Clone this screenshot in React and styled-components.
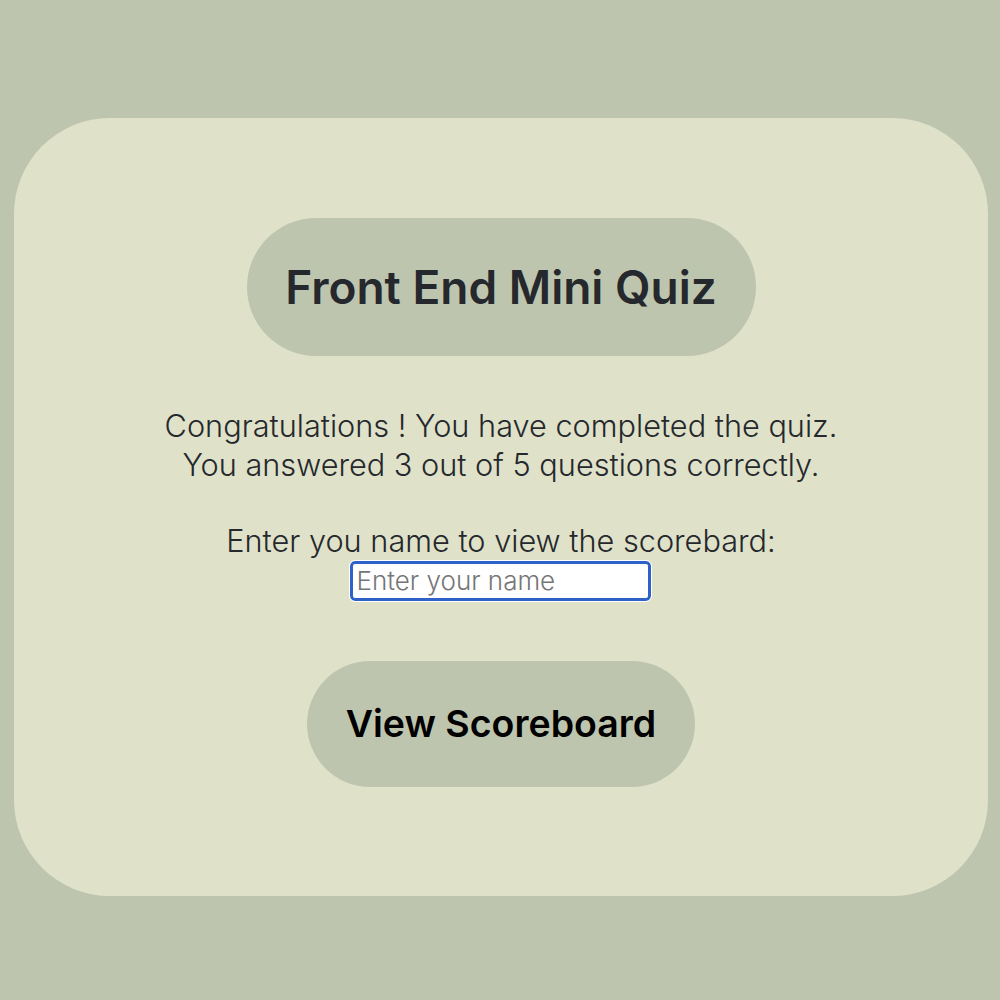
import styled, { createGlobalStyle } from "styled-components";

const GlobalStyle = createGlobalStyle`
  html, body {
    margin: 0;
    padding: 0;
    background: #bec5ae;
    font-family: Inter, "Noto Sans", sans-serif;
  }
`;

// Component

function App() {
  return (
    <>
      <GlobalStyle />
      <Page>
        <Card>
          <Title>Front End Mini Quiz</Title>
          <Message>
            Congratulations ! You have completed the quiz.
            <br />
            You answered 3 out of 5 questions correctly.
          </Message>
          <NameForm>
            <Label htmlFor="name">Enter you name to view the scorebard:</Label>
            <NameInput id="name" type="text" placeholder="Enter your name" />
          </NameForm>
          <ActionButton>View Scoreboard</ActionButton>
        </Card>
      </Page>
    </>
  );
}

export default App;

// Style

const Page = styled.main`
  display: flex;
  justify-content: center;
  padding: 118px 12px 0 14px;
  min-height: 1000px;
  box-sizing: border-box;
`;

const Card = styled.section`
  flex: 1;
  display: flex;
  flex-direction: column;
  align-items: center;
  height: 778px;
  box-sizing: border-box;
  padding-top: 100px;
  background: #dfe2c9;
  border-radius: 96px;
`;

const Title = styled.h1`
  margin: 0;
  width: 509px;
  height: 138px;
  display: flex;
  align-items: center;
  justify-content: center;
  background: #bec5ae;
  border-radius: 69px;
  color: #25282c;
  font-size: 46px;
  font-weight: 600;
`;

const Message = styled.p`
  margin: 51px 0 0;
  text-align: center;
  color: #25282c;
  font-size: 30.7px;
  font-weight: 300;
  line-height: 38.5px;
`;

const NameForm = styled.div`
  display: flex;
  flex-direction: column;
  align-items: center;
  margin-top: 38px;
`;

const Label = styled.label`
  color: #25282c;
  font-size: 30.7px;
  font-weight: 300;
  line-height: 38.5px;
`;

const NameInput = styled.input`
  width: 301px;
  height: 40px;
  box-sizing: border-box;
  padding: 0 3px;
  border: 3px solid #2f62c8;
  border-radius: 5px;
  outline: 1.5px solid #ffffff;
  background: #ffffff;
  font-family: Inter, "Noto Sans", sans-serif;
  font-size: 26px;
  font-weight: 300;
  color: #25282c;

  &::placeholder {
    color: #767676;
  }
`;

const ActionButton = styled.button`
  margin-top: 60px;
  width: 388px;
  height: 126px;
  border: none;
  border-radius: 63px;
  background: #bec5ae;
  color: #000000;
  font-family: Inter, "Noto Sans", sans-serif;
  font-size: 37.5px;
  font-weight: 600;
  cursor: pointer;
`;
